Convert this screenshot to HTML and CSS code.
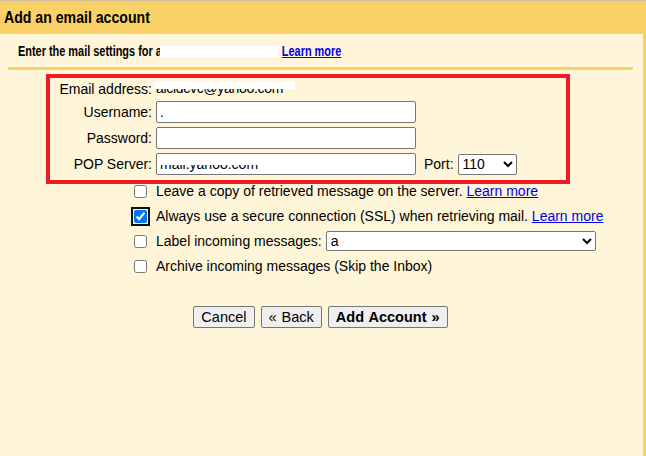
FILE: index.html
```html
<!DOCTYPE html>
<html lang="en">
<head>
    <meta charset="UTF-8">
    <title>Add an email account</title>
    <link rel="stylesheet" href="styles.css">
</head>
<body>
    <div class="header">
        <h1 class="narrow">Add an email account</h1>
    </div>

    <div class="panel">
        <div class="intro">
            <span class="narrow">Enter the mail settings for a<span class="redact-box"></span> <a href="#">Learn more</a></span>
        </div>
        <div class="rule"></div>

        <div class="form-grid">
            <div class="label">Email address:</div>
            <div class="value"><span class="masked">alcldcvc@yahoo.com</span></div>
            <div></div>

            <div class="label">Username:</div>
            <div class="field"><input type="text" class="text-input" value="."><span class="input-mask"></span></div>
            <div></div>

            <div class="label">Password:</div>
            <div class="field"><input type="password" class="text-input"></div>
            <div></div>

            <div class="label">POP Server:</div>
            <div class="field"><input type="text" class="text-input" value="mail.yahoo.com"><span class="input-mask"></span></div>
            <div class="port">
                <span>Port:</span>
                <select class="port-select">
                    <option>110</option>
                    <option>995</option>
                </select>
            </div>
        </div>

        <div class="options">
            <label class="option">
                <input type="checkbox" class="check">
                <span>Leave a copy of retrieved message on the server. <a href="#">Learn more</a></span>
            </label>
            <label class="option">
                <input type="checkbox" class="check check-focus" checked>
                <span>Always use a secure connection (SSL) when retrieving mail. <a href="#">Learn more</a></span>
            </label>
            <label class="option">
                <input type="checkbox" class="check">
                <span>Label incoming messages:</span>
                <select class="label-select">
                    <option>a</option>
                </select>
            </label>
            <label class="option">
                <input type="checkbox" class="check">
                <span>Archive incoming messages (Skip the Inbox)</span>
            </label>
        </div>

        <div class="buttons">
            <button class="btn">Cancel</button>
            <button class="btn">&laquo; Back</button>
            <button class="btn btn-primary">Add Account &raquo;</button>
        </div>

        <!-- annotation drawn over the screenshot -->
        <div class="highlight"></div>
    </div>
</body>
</html>
```

FILE: styles.css
```css
:root {
    --yellow: #f9d166;
    --cream: #fff5d9;
    --red: #ed1c24;
    --border: #767676;
    --link: #0000ee;
}

html, body {
    height: 100%;
}

body {
    margin: 0;
    background-color: var(--cream);
    font-family: 'Liberation Sans', Arial, sans-serif;
    font-size: 14px;
    color: #000;
    border-top: 1px solid #cdbf9f;
    box-sizing: border-box;
}

a {
    color: var(--link);
}

/* the bold headings in the shot are squeezed horizontally */
.narrow {
    display: inline-block;
    white-space: nowrap;
    transform: scaleX(0.83);
    transform-origin: left center;
}

.header {
    background-color: var(--yellow);
    height: 33px;
    padding-left: 4px;
}

.header h1 {
    margin: 0;
    font-size: 17px;
    line-height: 34px;
}

.panel {
    position: relative;
    min-height: calc(100% - 33px);
    box-sizing: border-box;
    padding: 0 10px 0 8px;
    border-right: 3px solid var(--yellow);
}

.intro {
    padding: 9px 0 8px 10px;
    font-size: 14px;
    font-weight: bold;
    line-height: 16px;
}

.intro .narrow {
    transform: scaleX(0.78);
}

.redact-box {
    display: inline-block;
    width: 152px;
    height: 11px;
    background: #fff;
    vertical-align: -1px;
    margin-left: -2px;
}

.rule {
    height: 3px;
    background-color: var(--yellow);
}

.form-grid {
    display: grid;
    grid-template-columns: 144px 260px auto;
    grid-template-rows: 17px 22px 22px 22px;
    column-gap: 4px;
    row-gap: 4px;
    margin-top: 10px;
    align-items: center;
}

.label {
    text-align: right;
}

.value {
    line-height: 17px;
}

.masked {
    position: relative;
    display: inline-block;
    letter-spacing: -0.3px;
}

.masked::after {
    content: '';
    position: absolute;
    left: -2px;
    right: -12px;
    top: 1px;
    height: 8px;
    background: #fff;
}

.field {
    position: relative;
    height: 22px;
}

.text-input {
    width: 100%;
    height: 22px;
    box-sizing: border-box;
    border: 1px solid var(--border);
    border-radius: 2px;
    background: #fff;
    padding: 1px 3px;
    font-family: 'Liberation Sans', Arial, sans-serif;
    font-size: 14px;
}

.input-mask {
    position: absolute;
    left: 3px;
    right: 20px;
    top: 3px;
    height: 9px;
    background: #fff;
}

.port {
    display: flex;
    align-items: center;
    gap: 4px;
    margin-left: 4px;
}

.port-select {
    width: 59px;
    height: 21px;
    font-family: 'Liberation Sans', Arial, sans-serif;
    font-size: 14px;
    border: 1px solid var(--border);
    border-radius: 2px;
    background: #fff;
}

.options {
    margin: 6px 0 0 126px;
    display: flex;
    flex-direction: column;
    gap: 5px;
}

.option {
    display: flex;
    align-items: center;
    height: 20px;
    gap: 9px;
}

.check {
    width: 13px;
    height: 13px;
    margin: 0;
}

.check-focus {
    outline: 2px solid #101010;
    outline-offset: 1px;
    border-radius: 2px;
}

.label-select {
    width: 270px;
    height: 20px;
    margin-left: -5px;
    font-family: 'Liberation Sans', Arial, sans-serif;
    font-size: 14px;
    border: 1px solid var(--border);
    border-radius: 2px;
    background: #fff;
}

.buttons {
    display: flex;
    justify-content: center;
    gap: 6px;
    margin-top: 30px;
}

.btn {
    height: 22px;
    padding: 0 7px;
    font-family: 'Liberation Sans', Arial, sans-serif;
    font-size: 14.5px;
    word-spacing: 1px;
    background: #efefef;
    border: 1px solid var(--border);
    border-radius: 2px;
    color: #000;
}

.btn-primary {
    font-weight: bold;
}

.highlight {
    position: absolute;
    left: 46px;
    top: 40px;
    width: 524px;
    height: 110px;
    box-sizing: border-box;
    border: 4px solid var(--red);
    pointer-events: none;
}
```
